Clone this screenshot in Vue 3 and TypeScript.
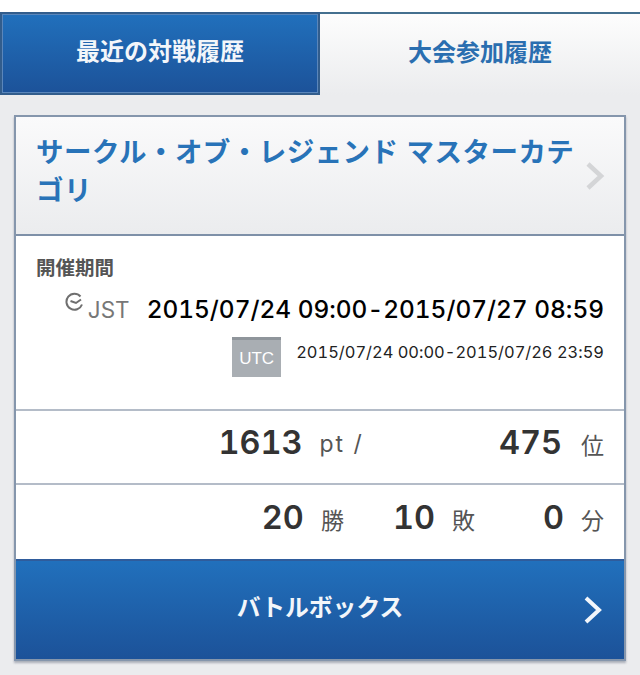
<script setup lang="ts">
const tabs: { label: string; active: boolean }[] = [
  { label: '最近の対戦履歴', active: true },
  { label: '大会参加履歴', active: false },
]
</script>

<template>
  <div class="page">
    <div class="tabs">
      <div v-for="t in tabs" :key="t.label" class="tab" :class="{ active: t.active }">{{ t.label }}</div>
    </div>
    <div class="wrap">
      <section class="card">
        <header class="head">
          <h2 class="title">サークル・オブ・レジェンド マスターカテゴリ</h2>
          <svg class="chev" width="20" height="30" viewBox="0 0 20 30">
            <path d="M3 3 L16 15 L3 27" fill="none" stroke="#d4d5d7" stroke-width="4.5" />
          </svg>
        </header>
        <div class="period">
          <div class="plabel">開催期間</div>
          <div class="jst">
            <svg class="clock" width="20" height="20" viewBox="0 0 20 20">
              <path d="M17 12.5 A8 8 0 1 1 15.5 4.5" fill="none" stroke="#6f6f6f" stroke-width="2" />
              <path d="M5.5 9 L11 11 L16 7.5" fill="none" stroke="#6f6f6f" stroke-width="2" />
            </svg>
            <span class="jlabel">JST</span>
            <span class="jdate">2015/07/24 09:00-2015/07/27 08:59</span>
          </div>
          <div class="utc">
            <span class="ubadge">UTC</span>
            <span class="udate">2015/07/24 00:00-2015/07/26 23:59</span>
          </div>
        </div>
        <div class="row r1">
          <b class="num">1613</b><span class="unit pt">pt /</span>
          <b class="num rank">475</b><span class="unit gap wide">位</span>
        </div>
        <div class="row r2">
          <b class="num">20</b><span class="unit gap">勝</span>
          <b class="num g">10</b><span class="unit gap">敗</span>
          <b class="num g2">0</b><span class="unit gap">分</span>
        </div>
        <button class="btn">
          <span>バトルボックス</span>
          <svg class="chev2" width="20" height="30" viewBox="0 0 20 30">
            <path d="M3 3 L16 15 L3 27" fill="none" stroke="#f2f6fb" stroke-width="4" />
          </svg>
        </button>
      </section>
    </div>
  </div>
</template>

<style>
html, body { margin: 0; background: #ebecee; }
</style>

<style scoped>
.page {
  width: 640px;
  height: 675px;
  overflow: hidden;
  background: #ebecee;
  font-family: "Liberation Sans", "Noto Sans CJK JP", sans-serif;
}
.tabs {
  display: flex;
  padding-top: 12px;
  background: #fff;
}
.tab {
  flex: 1;
  box-sizing: border-box;
  height: 83px;
  border-top: 2px solid #44708f;
  display: flex;
  align-items: center;
  justify-content: center;
  font-size: 24px;
  font-weight: 700;
  color: #2a6eb0;
  background: linear-gradient(#fdfdfd, #ebecee);
  padding-bottom: 8px;
}
.tab.active {
  flex: 0 0 320px;
  color: #f3f6fa;
  border: 2px solid #325d8c;
  box-shadow: inset 0 0 0 1px #5a86bb;
  background: linear-gradient(#2170bc, #1c5299);
}
.wrap { padding: 20px 14px 0; }
.card {
  border: 2px solid #8596ac;
  background: #fff;
  box-shadow: 0 2px 2px rgba(90, 100, 120, 0.45);
}
.head {
  height: 119px;
  box-sizing: border-box;
  border-bottom: 2px solid #7e90a8;
  background: linear-gradient(#fafafb, #ebecee);
  padding: 17px 19px 0 20px;
  display: flex;
  align-items: center;
  gap: 8px;
}
.title {
  margin: 0;
  flex: 1;
  align-self: flex-start;
  font-size: 27.5px;
  line-height: 38px;
  font-weight: 700;
  color: #2873b8;
  letter-spacing: 0.45px;
}
.chev { flex: none; margin-top: -17px; }
.period {
  height: 175px;
  box-sizing: border-box;
  padding: 19px 20px 0 20px;
  border-bottom: 2px solid #b4bcc8;
}
.plabel {
  font-size: 19.5px;
  line-height: 26px;
  font-weight: 700;
  color: #555;
}
.jst {
  display: flex;
  align-items: center;
  justify-content: flex-end;
  height: 32px;
  margin-top: 12px;
}
.clock { flex: none; margin-top: -14px; margin-right: 3px; }
.jlabel { font-family: Inter, sans-serif; font-size: 22.5px; color: #777; margin-right: 17px; }
.jdate {
  font-family: Inter, sans-serif;
  font-size: 24.4px;
  font-weight: 500;
  font-feature-settings: "calt" 0, "tnum" 1;
  color: #000;
  white-space: nowrap;
}
.utc {
  display: flex;
  align-items: flex-start;
  justify-content: flex-end;
  margin-top: 12px;
}
.ubadge {
  width: 49px;
  height: 40px;
  box-sizing: border-box;
  border-top: 3px solid #8f959b;
  background: #a9aeb3;
  color: #fff;
  font-size: 17px;
  text-align: center;
  line-height: 37px;
  margin-right: 15px;
}
.udate {
  font-family: Inter, sans-serif;
  font-size: 16.45px;
  font-feature-settings: "calt" 0, "tnum" 1;
  color: #222;
  line-height: 20px;
  margin-top: 5px;
  white-space: nowrap;
}
.row {
  height: 74px;
  box-sizing: border-box;
  display: flex;
  align-items: center;
  justify-content: flex-end;
  padding: 0 20px 9px;
  color: #333;
}
.r1 { border-bottom: 2px solid #b4bcc8; }
.num {
  font-family: Inter, sans-serif;
  font-size: 32.5px;
  font-weight: 600;
  font-variant-numeric: tabular-nums;
  color: #333;
}
.unit { font-size: 23px; color: #555; margin-top: 2px; }
.gap { margin-left: 17px; }
.wide { margin-left: 19px; }
.pt { margin-left: 17px; font-family: Inter, sans-serif; font-size: 23px; letter-spacing: 2px; }
.rank { margin-left: 135px; }
.g { margin-left: 49px; }
.g2 { margin-left: 68px; }
.btn {
  display: flex;
  align-items: center;
  justify-content: center;
  position: relative;
  width: 100%;
  height: 100px;
  padding: 0 0 10px;
  border: none;
  border-top: 2px solid #2f5c9c;
  background: linear-gradient(#2170bc, #1c5299);
  color: #f3f6fa;
  font-family: inherit;
  font-size: 23.8px;
  font-weight: 700;
}
.chev2 { position: absolute; right: 21px; top: 34px; }
</style>
